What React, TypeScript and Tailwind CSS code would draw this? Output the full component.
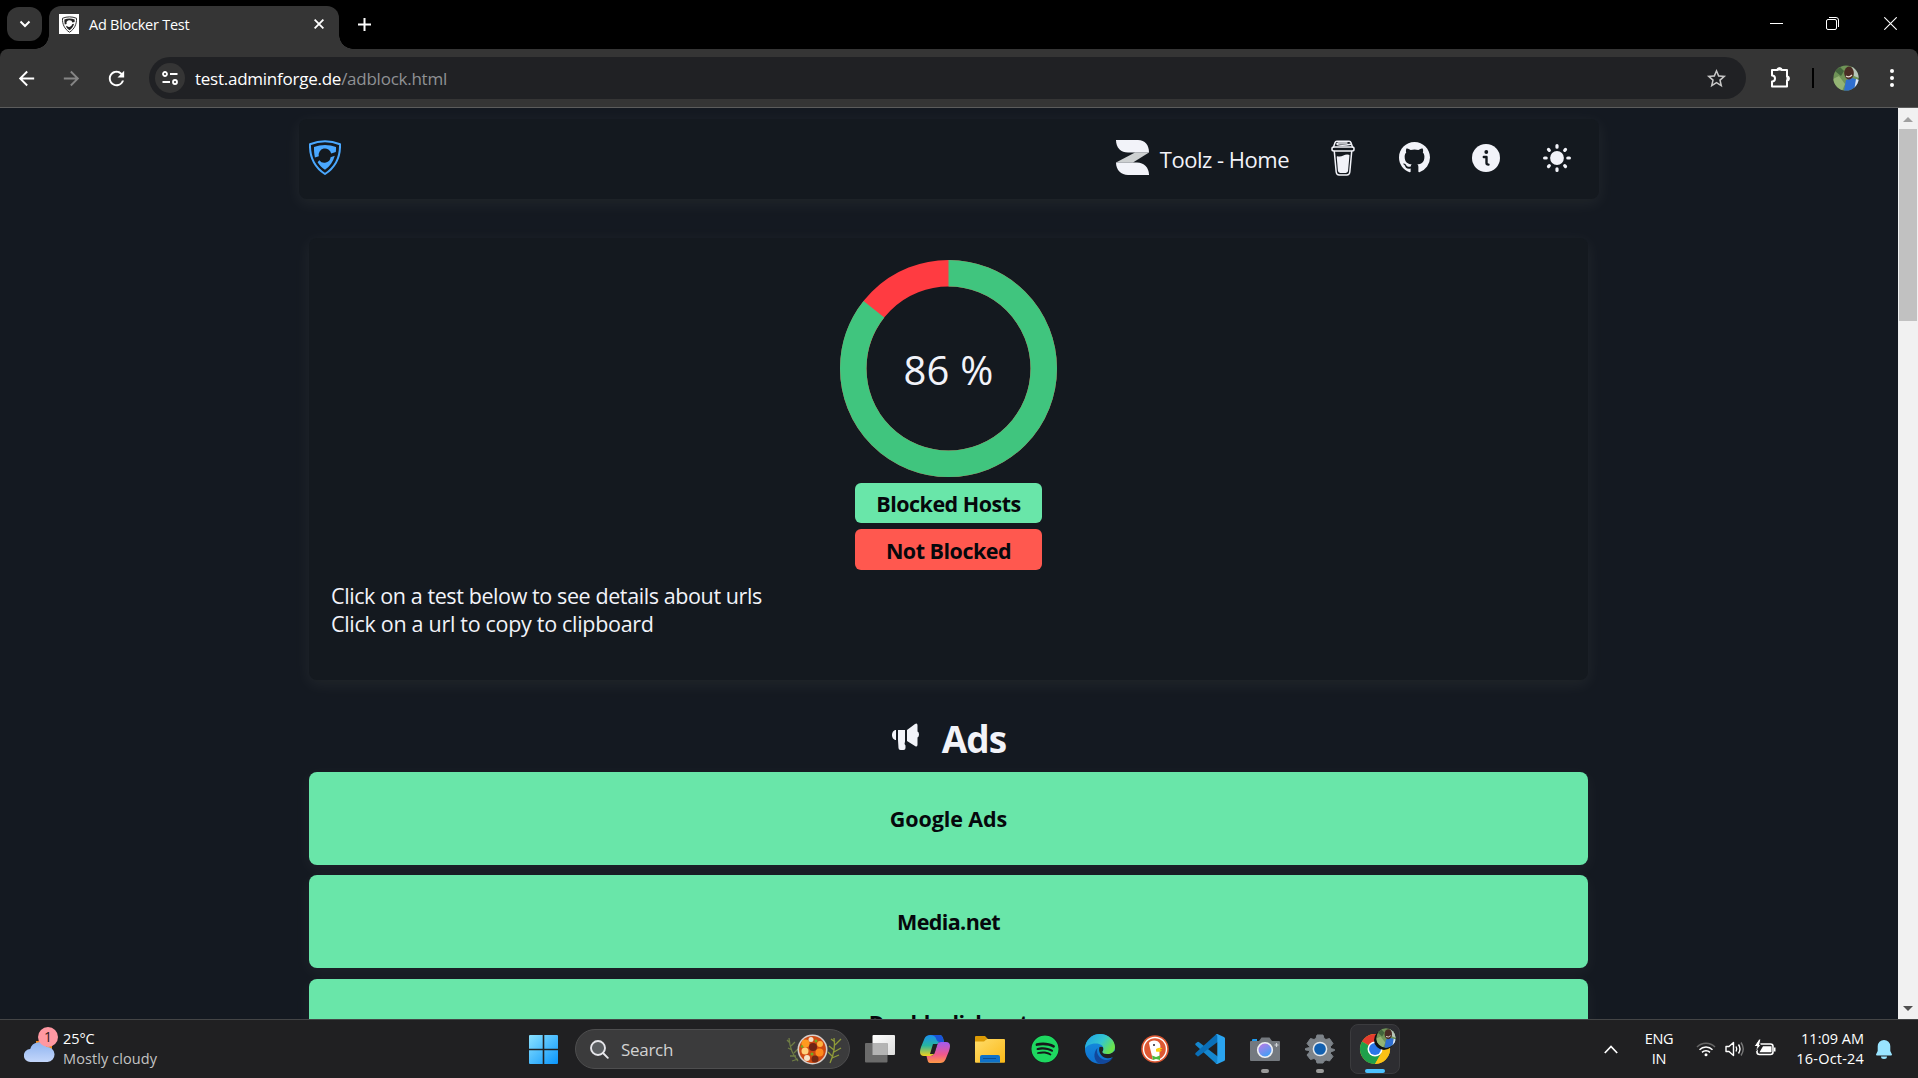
import type { ReactNode } from "react";
import { BsGithub } from "react-icons/bs";
import { FaSpotify } from "react-icons/fa";
import { MdArrowBack, MdArrowForward, MdRefresh, MdStarOutline } from "react-icons/md";

function Shield({ className, color }: { className: string; color: string }) {
  return (
    <svg viewBox="0 0 32 35" className={className} fill="none">
      <path d="M1 4.200C11 .2 21 .2 31 4.200c.4 12.500-4 22.500-15 29.800C5 26.700.6 16.700 1 4.200Z" stroke={color} strokeWidth="2" strokeLinejoin="round" />
      <path d="M5 7C12 4.200 20 4.200 27 7c.1 2 .1 3.200-.2 5l-4.600 1.400A6.300 6.300 0 0 0 9.800 16.200L5.900 17.500C5.100 13.500 4.900 10 5 7Z" fill={color} />
      <path d="M8.600 22.200l1.700-2a6.300 6.300 0 0 0 11.300-3l4.200-1.400c-1.700 6-4.900 10.500-9.800 14-3-2-5.500-4.500-7.400-7.600Z" fill={color} />
    </svg>
  );
}

function Avatar({ className }: { className: string }) {
  return (
    <svg viewBox="0 0 26 26" className={className}>
      <clipPath id="face"><circle cx="13" cy="13" r="12.600" /></clipPath>
      <g clipPath="url(#face)">
        <rect width="26" height="26" fill="#6f9357" />
        <path d="M0 14l6-3 6 8-3 7H0Z" fill="#94b474" />
        <path d="M2 6l5-4 4 4-3 5Z" fill="#42643c" />
        <path d="M18 0h8v13l-5-2Z" fill="#b7c4ba" />
        <path d="M11 26l2-11 6-2 7 2v11Z" fill="#2f6fd0" />
        <path d="M23 14l3 1v7l-5 4Z" fill="#dfe6f2" />
        <ellipse cx="16" cy="8" rx="4.800" ry="6.500" fill="#4a2c25" />
        <path d="M13 11q3 2 6-1" stroke="#e8d8d0" strokeWidth="1.200" fill="none" />
      </g>
    </svg>
  );
}

function TabStrip() {
  return (
    <div className="flex h-[49px] shrink-0 items-start bg-black text-white">
      <div className="ml-[7px] mt-[7px] flex h-[34px] w-[35px] items-center justify-center rounded-xl bg-[#353535]">
        <svg viewBox="0 0 12 8" className="h-2 w-3" fill="none" stroke="#fff" strokeWidth="2"><path d="M1.500 1.500 6 6l4.500-4.500" /></svg>
      </div>
      <div className="ml-[-7px] mt-[35px] h-3.5 w-3.5 bg-[radial-gradient(circle_at_0_0,transparent_13.5px,#353535_14px)]" />
      <div className="mt-1.5 flex h-[43px] w-[290px] items-center rounded-t-xl bg-[#353535] pb-[7px] pr-3">
        <div className="ml-2.5 flex h-5 w-5 items-center justify-center bg-white"><Shield className="h-[17px] w-[15px]" color="#222" /></div>
        <span className="ml-[10px] pt-px text-[14.500px] tracking-[-0.25px]">Ad Blocker Test</span>
        <svg viewBox="0 0 10 10" className="ml-auto mr-[3px] h-[10px] w-[10px]" stroke="#fff" strokeWidth="1.800"><path d="M.6.6l8.800 8.800M9.400.6.6 9.400" /></svg>
      </div>
      <div className="mt-[35px] h-3.5 w-3.5 bg-[radial-gradient(circle_at_100%_0,transparent_13.5px,#353535_14px)]" />
      <svg viewBox="0 0 13 13" className="ml-[5px] mt-[18px] h-[13px] w-[13px]" stroke="#fff" strokeWidth="2"><path d="M6.500 0v13M0 6.500h13" /></svg>
      <div className="ml-auto mr-[21px] mt-[17px] flex items-center">
        <svg viewBox="0 0 13 13" className="mr-[43px] h-[13px] w-[13px]" stroke="#fff" strokeWidth="1"><path d="M0 6.500h13" /></svg>
        <svg viewBox="0 0 13 13" className="mr-[45px] h-[13px] w-[13px]" stroke="#fff" fill="none"><rect x=".5" y="2.500" width="10" height="10" rx="1.500" /><path d="M3 .5h7a2.500 2.500 0 0 1 2.500 2.500v7" /></svg>
        <svg viewBox="0 0 13 13" className="h-[13px] w-[13px]" stroke="#fff" strokeWidth="1.100"><path d="M.3.3l12.400 12.400M12.700.3.3 12.700" /></svg>
      </div>
    </div>
  );
}

function Toolbar() {
  return (
    <div className="h-[59px] shrink-0 bg-black">
      <div className="flex h-full items-center rounded-t-lg border-b border-[#5c5c5c] bg-[#353535] text-white">
        <MdArrowBack className="ml-[15px] h-[23px] w-[23px]" />
        <MdArrowForward className="ml-[22px] h-[23px] w-[23px] text-[#858585]" />
        <MdRefresh className="ml-[22px] h-[23px] w-[23px]" />
        <div className="ml-[21px] flex h-[42px] w-[1597px] items-center rounded-full bg-[#202124]">
          <div className="ml-[6px] flex h-[30px] w-[30px] items-center justify-center rounded-full bg-[#353535]">
            <svg viewBox="0 0 16 14" className="h-3.5 w-4" fill="none" stroke="#fff" strokeWidth="1.800"><circle cx="3" cy="3" r="2" /><circle cx="13" cy="11" r="2" /><path d="M8 3h7.500M.5 11H8" /></svg>
          </div>
          <span className="ml-[10px] pt-px text-[17px] tracking-[-0.25px] text-[#8f9194]"><span className="text-white">test.adminforge.de</span>/adblock.html</span>
          <MdStarOutline className="ml-auto mr-[18px] h-[23px] w-[23px] text-[#c7c7c7]" />
        </div>
        <svg viewBox="0 0 21 21" className="ml-[24px] mt-[-2px] h-[21px] w-[21px]" fill="none" stroke="#fff" strokeWidth="2" strokeLinejoin="round">
          <path d="M2 3h5.500a2 1.800 0 0 1 4 0H17v6.500a1.800 2 0 0 1 0 4V19.500H2v-5a3 3 0 0 0 0-6Z" />
          <path d="M7.500 3a2 2 0 0 1 4 0ZM17 9.500a2 2 0 0 1 0 4Z" fill="#fff" strokeWidth="1" />
        </svg>
        <div className="ml-[21px] h-5 w-0.5 bg-black" />
        <Avatar className="ml-[19px] h-[26px] w-[26px]" />
        <svg viewBox="0 0 4 18" className="ml-[31px] h-[18px] w-1" fill="#fff"><circle cx="2" cy="2" r="2" /><circle cx="2" cy="9" r="2" /><circle cx="2" cy="16" r="2" /></svg>
      </div>
    </div>
  );
}

function ToolzLogo() {
  return (
    <svg viewBox="0 0 33 35" className="h-[35px] w-[33px]">
      <path d="M0 22.500 19 12.500h14L17 22.500Z" fill="#cdd0d1" />
      <path d="M0 0h22c7 0 11 5 11 12.500H12C5 12.500 0 8 0 0Z" fill="#f2f3f9" />
      <path d="M0 22.500h21c7 0 12 5 12 12.500H12C5 35 0 30 0 22.500Z" fill="#f2f3f9" />
    </svg>
  );
}

function CoffeeCup() {
  return (
    <svg viewBox="0 0 24 36" className="h-9 w-6" fill="none" stroke="#f2f3f9" strokeWidth="1.500" strokeLinecap="round" strokeLinejoin="round">
      <path d="M2.500 7 4 2.800Q4.300 1.300 6 1.200h12q1.700.1 2 1.600L21.500 7" />
      <path d="M20 4.200Q11 6 6.500 4.600 5 3.500 7.500 3H16" />
      <path d="M1 8.500Q1 7 3 7h18q2 0 2 1.500v1Q23 11 21 11H3q-2 0-2-1.500Z" />
      <path d="M3.300 11.500 5.200 32q.3 3 3 3h7.600q2.700 0 3-3l1.900-20.500" />
      <path d="m6.500 17 1.200 14q.2 1.200 1.500 1.200h5.600q1.300 0 1.500-1.200L17.700 15.500q-2.700-.5-5 .7-3 1.500-6.200.8Z" fill="#f2f3f9" />
    </svg>
  );
}

function InfoIcon() {
  return (
    <svg viewBox="0 0 28 28" className="mb-0.5 ml-[42px] h-7 w-7" fill="none">
      <circle cx="14" cy="14" r="14" fill="#f2f3f9" />
      <circle cx="14.300" cy="8" r="1.900" fill="#14191f" />
      <path d="M11.800 13h2.700v6q0 1.600 2 1.600" stroke="#14191f" strokeWidth="2.400" strokeLinecap="round" strokeLinejoin="round" />
    </svg>
  );
}

function SunIcon() {
  return (
    <svg viewBox="0 0 28 28" className="mb-0.5 ml-[43px] mr-7 h-7 w-7" stroke="#f2f3f9" strokeWidth="3.200" strokeLinecap="round">
      <circle cx="14" cy="14" r="6.900" fill="#f2f3f9" stroke="none" />
      <path d="M14 1.600v1.600M14 24.800v1.600M1.600 14h1.600M24.800 14h1.600M5.500 5.500l.8.800M21.700 21.700l.8.800M5.500 22.500l.8-.8M21.700 6.300l.8-.8" />
    </svg>
  );
}

function SiteHeader() {
  return (
    <header className="mt-[11px] flex h-20 w-[1300px] shrink-0 items-center rounded-lg bg-[#14191f] text-[#f2f3f9] shadow-[0_4px_15px_2px_rgba(255,255,220,0.05)]">
      <Shield className="mb-1 ml-[10px] h-[35px] w-8" color="#4aa8ff" />
      <div className="mb-[3px] ml-auto"><ToolzLogo /></div>
      <span className="ml-[11px] text-[22px] tracking-[-0.5px]">Toolz - Home</span>
      <div className="mb-[3px] ml-[42px]"><CoffeeCup /></div>
      <BsGithub className="mb-[3px] ml-[44px] h-[31px] w-[31px]" />
      <InfoIcon />
      <SunIcon />
    </header>
  );
}

function Donut() {
  const length = 2 * Math.PI * 95.25;
  return (
    <div className="relative h-[217px] w-[217px]">
      <svg viewBox="0 0 217 217" className="h-full w-full" fill="none" strokeWidth="26.500">
        <circle cx="108.500" cy="108.500" r="95.250" stroke="#ff3b41" />
        <circle cx="108.500" cy="108.500" r="95.250" stroke="#40c57e" strokeDasharray={`${length * 0.8555} ${length}`} transform="rotate(-90 108.500 108.500)" />
      </svg>
      <div className="absolute inset-0 flex items-center justify-center pt-0.5 text-[40px] tracking-[0.2px] text-[#f2f3f9]">86 %</div>
    </div>
  );
}

function Results() {
  return (
    <section className="mr-px mt-[39px] flex h-[442px] w-[1279px] shrink-0 flex-col items-center rounded-lg bg-[#14191f] pt-[22px] shadow-[0_4px_15px_2px_rgba(255,255,220,0.05)]">
      <Donut />
      <div className="mt-1.5 flex h-10 w-[187px] items-center justify-center rounded-md bg-[#69e6a9] pt-0.5 text-[21.500px] font-bold tracking-[-0.5px] text-[#06080c]">Blocked Hosts</div>
      <div className="mt-1.5 flex h-[41px] w-[187px] items-center justify-center rounded-md bg-[#ff584f] pt-1 text-[21.500px] font-bold tracking-[-0.5px] text-[#06080c]">Not Blocked</div>
      <p className="mt-[12px] w-full pl-[22px] text-[21.500px] leading-7 tracking-[-0.4px] text-[#f2f3f9]">Click on a test below to see details about urls<br /><span className="tracking-[-0.3px]">Click on a url to copy to clipboard</span></p>
    </section>
  );
}

function Megaphone() {
  return (
    <svg viewBox="0 0 28 28" className="mb-0.5 h-7 w-7" fill="#f2f3f9">
      <path d="M4 7v10C1.500 17 0 14.500 0 12s1.500-5 4-5Z" />
      <path d="M6 7h7v11.500q-1 2 .5 4V25q0 2-2 2H8.500Q6.500 27 6.500 25L6 17Z" />
      <path d="M15 7l8-6q2.500-1.500 2.500 1.500v6q1.500.6 1.500 3t-1.500 3v7q0 3-2.500 1.500L15 18Z" />
    </svg>
  );
}

function Host({ name, className }: { name: string; className: string }) {
  return (
    <div className={`mb-[10.400px] mr-px flex h-[93px] w-[1279px] shrink-0 items-center justify-center rounded-lg bg-[#69e6a9] text-[21.500px] font-bold text-[#06080c] shadow-[0_4px_15px_2px_rgba(255,255,220,0.04)] ${className}`}>{name}</div>
  );
}

function Page() {
  return (
    <div className="flex min-h-0 flex-1 overflow-hidden">
      <main className="flex flex-1 flex-col items-center overflow-hidden bg-[#141921]">
        <SiteHeader />
        <Results />
        <h2 className="flex h-[92px] shrink-0 items-center gap-[22px] pt-[24px] text-[#f2f3f9]"><Megaphone /><span className="text-[37px] font-bold leading-none tracking-[-1px]">Ads</span></h2>
        <Host name="Google Ads" className="pt-px tracking-[-0.1px]" />
        <Host name="Media.net" className="pt-px tracking-[-0.6px]" />
        <Host name="Doubleclick.net" className="pb-1 tracking-[-0.5px]" />
      </main>
      <div className="flex w-5 flex-col items-center bg-[#f1f1f1]">
        <svg viewBox="0 0 20 21" className="h-[21px] w-5 shrink-0" fill="#a0a0a0"><path d="M5 14l5-5 5 5Z" /></svg>
        <div className="h-[192px] w-[18px] bg-[#c1c1c1]" />
        <svg viewBox="0 0 20 21" className="mt-auto h-[21px] w-5" fill="#505050"><path d="M5 8l5 5 5-5Z" /></svg>
      </div>
    </div>
  );
}

function AppCell({ children, running, active }: { children: ReactNode; running?: boolean; active?: boolean }) {
  return (
    <div className="flex h-[59px] w-[55px] items-center justify-center">
      <div className={active ? "flex h-[50px] w-[50px] flex-col items-center rounded-lg border border-[#3b3b3e] bg-[#2d2d31] pt-[9px]" : "flex h-[50px] w-[50px] flex-col items-center pt-[10px]"}>
        {children}
        {running && <div className="mt-[5px] h-1 w-2 rounded-full bg-[#9a9a9a]" />}
        {active && <div className="mt-[5px] h-1 w-5 shrink-0 rounded-full bg-[#4cc2ff]" />}
      </div>
    </div>
  );
}

const ICON = "h-[30px] w-[30px] shrink-0 overflow-visible";

function Chrome() {
  return (
    <svg viewBox="0 0 30 30" className={ICON}>
      <circle cx="15" cy="15" r="15" fill="#fbc116" />
      <path d="M15 15 2 7.500A15 15 0 0 1 28 7.500Z" fill="#e33b2e" />
      <path d="M2 7.500A15 15 0 0 0 15 30l6.500-11.200L15 15Z" fill="#1fa04b" />
      <path d="M28 7.500H15l6.500 11.300L15 30A15 15 0 0 0 28 7.500Z" fill="#fbc116" />
      <circle cx="15" cy="15" r="7.500" fill="#fff" /><circle cx="15" cy="15" r="6" fill="#2b76e8" />
      <circle cx="24" cy="6" r="10" fill="#111" />
      <svg x="16" y="-6" width="20" height="20" viewBox="0 0 26 26"><Avatar className="" /></svg>
    </svg>
  );
}

function SearchBox() {
  return (
    <div className="ml-[17px] flex h-10 w-[275px] items-center rounded-full border border-[#4e4e4f] bg-[#3b3b3c]">
      <svg viewBox="0 0 19 19" className="ml-[14px] h-[19px] w-[19px]" fill="#5a5d60" stroke="#e6e6ea" strokeWidth="1.900" strokeLinecap="round"><circle cx="8" cy="8" r="7" /><path d="m13 13 4.800 4.800" /></svg>
      <span className="ml-[12px] pt-px text-[17px] tracking-[-0.3px] text-[#d2d2d2]">Search</span>
      <svg viewBox="0 0 56 31" className="ml-auto mr-[7px] h-[31px] w-14">
        <g stroke="#6f7d45" strokeWidth="1.300" fill="none">
          <path d="M3 4q1 14 9 23M4 9 1 6M5 12l4-4M6 16l-4-2M8 19l4-4M10 22l-6 0M12 25l-6 2" />
          <path stroke="#8f9b39" d="M48 4q2 12-4 25M49 8l-4-3M49 11l6-6M48 16l-5-4M48 18l7-4M46 22l-4-4M46 24l7-3" />
        </g>
        <circle cx="26.500" cy="15.500" r="15" fill="#d8d0cc" /><circle cx="26.500" cy="15.500" r="13.400" fill="#cf4a12" />
        <circle cx="19.500" cy="9.500" r="4" fill="#ff9a1f" /><circle cx="33.500" cy="18.500" r="4" fill="#ff8a1c" /><circle cx="19" cy="17" r="3.500" fill="#ffd07a" /><circle cx="34" cy="10" r="3" fill="#ffb13d" />
        <circle cx="27" cy="13" r="4" fill="#6f2415" /><circle cx="29" cy="25" r="3.500" fill="#742812" /><circle cx="21" cy="24" r="3" fill="#f6e3c6" /><circle cx="25" cy="5.500" r="2.500" fill="#f3dfc4" />
        <circle cx="26" cy="20" r="1.500" fill="#6fae22" /><circle cx="30" cy="7" r="1.400" fill="#6fae22" /><circle cx="16" cy="12.500" r="1.300" fill="#6fae22" />
      </svg>
    </div>
  );
}

function Taskbar() {
  return (
    <div className="flex h-[59px] shrink-0 items-center border-t border-[#444546] bg-[#202022] text-white">
      <div className="relative ml-6 h-[38px] w-[34px]">
        <svg viewBox="0 0 34 38" className="mt-[-4px] h-[38px] w-[34px]">
          <defs><linearGradient id="cloud" x2="0" y2="1"><stop stopColor="#8fb4f0" /><stop offset="1" stopColor="#c3d6fa" /></linearGradient></defs>
          <path d="M12 15h16v8H12Z" fill="#f28a1a" />
          <path d="M6.500 36a6.500 6.500 0 0 1-.3-13A8.800 8.800 0 0 1 22.500 21 7.500 7.500 0 1 1 23.500 36Z" fill="url(#cloud)" />
          <circle cx="24" cy="11" r="10" fill="#ff98a2" />
        </svg>
        <span className="absolute left-[20px] top-[-3px] text-[14px] leading-5 text-[#2a1a1d]">1</span>
      </div>
      <div className="ml-[5px] text-[14.500px] leading-5 tracking-[-0.1px]">25°C<br /><span className="tracking-[0.1px] text-[#c4c4c4]">Mostly cloudy</span></div>
      <div className="ml-auto" />
      <div className="flex w-[874px] items-center">
        <svg viewBox="0 0 29 29" className="h-[29px] w-[29px]"><defs><linearGradient id="win" x2="1" y2="1"><stop stopColor="#8be2ff" /><stop offset="1" stopColor="#0a95fb" /></linearGradient></defs><path d="M0 1q0-1 1-1h12.700v13.800H0ZM15.300 0H28q1 0 1 1v12.800H15.300ZM0 15.300h13.700V29H1q-1 0-1-1ZM15.300 15.300H29V28q0 1-1 1H15.300Z" fill="url(#win)" /></svg>
        <SearchBox />
        <div className="ml-[2px] flex">
          <AppCell><svg viewBox="0 0 30 30" className={ICON}><defs><linearGradient id="tv" x2="1" y2="1"><stop stopColor="#fff" /><stop offset="1" stopColor="#dcdcdc" /></linearGradient></defs><rect x="7.500" y="1" width="22.500" height="20" rx="1" fill="url(#tv)" /><rect y="9" width="22.500" height="19.500" rx="1" fill="#6b6b6b" /><path d="M7.500 9h15v12h-15Z" fill="#b4b4b4" /></svg></AppCell>
          <AppCell><svg viewBox="0 0 30 30" className={ICON}><defs><linearGradient id="cpa" x2="0" y2="1"><stop stopColor="#1b8ff0" /><stop offset=".5" stopColor="#27b5a0" /><stop offset="1" stopColor="#f4d11c" /></linearGradient><linearGradient id="cpb" x2="0" y2="1"><stop stopColor="#a25bf0" /><stop offset=".6" stopColor="#f0588b" /><stop offset="1" stopColor="#ff9a45" /></linearGradient></defs>
            <path d="M20 1q2 0 3 3l1 4h-3q-3 0-4 3l-2.500 8Q13.500 22 10.500 22H4q-4 0-4-4 0-2 1-5L4.500 4.500Q6 1 10 1Z" fill="url(#cpa)" />
            <path d="M10 29q-2 0-2.500-3L6.500 22h4q3 0 4-3L17 11q1-3 4-3h5q4 0 4 4 0 2-1 5l-3.500 8.500Q24 29 20 29Z" fill="url(#cpb)" />
            <path d="m13 10-3 10h3.500q1 0 1.500-2l2.500-8Z" fill="#202022" />
            <path d="M10 1h10q2 0 3 3l1 4h-4Q17 8 16 4.500 15 1 10 1Z" fill="#1a53d8" /></svg></AppCell>
          <AppCell><svg viewBox="0 0 30 30" className={ICON}><defs><linearGradient id="fol" x2="1" y2="1"><stop stopColor="#ffdc6a" /><stop offset="1" stopColor="#fbb917" /></linearGradient></defs><path d="M0 3q0-1 1-1h9l3 3h-1l-2 4H0Z" fill="#dc9a05" /><path d="M0 7.500h9L12 5h17q1 0 1 1v22q0 .800-1 .800H1q-1 0-1-.800Z" fill="url(#fol)" /><path d="M5 28.800V23q0-2 2-2h16q2 0 2 2v5.800Z" fill="#0f72c9" /><path d="M8 24.500h13" stroke="#0b4e93" strokeWidth="1" /></svg></AppCell>
          <AppCell><div className="flex h-[30px] items-center"><FaSpotify className="h-7 w-7 rounded-full bg-[#16181a] text-[#1ed760]" /></div></AppCell>
          <AppCell><svg viewBox="0 0 30 30" className={ICON}><defs><linearGradient id="ea" x2="1" y2=".5"><stop stopColor="#1d9fe8" /><stop offset=".6" stopColor="#34c6cf" /><stop offset="1" stopColor="#6be34b" /></linearGradient><linearGradient id="eb" x2="0" y2="1"><stop stopColor="#1591e0" /><stop offset="1" stopColor="#0f6fcf" /></linearGradient></defs>
            <circle cx="15" cy="15" r="15" fill="url(#eb)" />
            <path d="M12.500 14c-2 6 3 12 9 12 3 0 5-1 6.800-3.200C26 27.500 21 30.500 15.500 30 8 28 8 18 12.500 14Z" fill="#12479b" />
            <path d="M14.500 13q4-1 4 1.700c0 2-1 2.500-1 3.300 0 1 2 2 5 2 3 0 5.500-1.500 6.800-3.500L32 21l-4 2q-4 2-7 1c-5-1-8-6.500-6.500-11Z" fill="#202022" />
            <path d="M0 15C0 6 7 0 15 0s15 6 15 13c0 4.500-3.500 7-7.500 7-3 0-5-1-5-2 0-.8 1-1.300 1-3.300C18.500 12 15.500 9.500 11 9.500 5 9.500 1 12 0 15Z" fill="url(#ea)" /></svg></AppCell>
          <AppCell><svg viewBox="0 0 30 30" className={ICON}><circle cx="15" cy="15" r="13.800" fill="#de5833" /><circle cx="15" cy="15" r="11.500" fill="none" stroke="#fff" strokeWidth="1.400" /><path d="M9 9c1-3 9-4 11 1 1 3 0 5-.5 6.500V26q-4 1.500-6.500 0L10 14Z" fill="#fff" /><circle cx="14" cy="11" r="1" fill="#223" /><path d="M16 15q4-2 6.500-.5-2 1-4 1.500 3 0 3.500.8-2 1.500-6 .7Z" fill="#fdd20a" /><path d="M12 21.500l4 1.500 4-1.500v4.500l-4-1-3 1Z" fill="#4cba3c" /></svg></AppCell>
          <AppCell><svg viewBox="0 0 30 30" className={ICON}><path d="M.5 9.500 2.500 8q.6-.4 1.300.1L24 23.500v5L21.500 30 .5 11Q0 10.200.5 9.500Z" fill="#1587cf" /><path d="M.5 20.500l2 1.700q.6.400 1.300-.1L24 7V1.500L21.500 0 .5 19Q0 19.800.5 20.500Z" fill="#0a6fb8" /><path d="M22.300 0 29 3q1 .5 1 1.500v21q0 1-1 1.500l-6.700 3Q21 30 20.500 29.500q1.800.5 1.800-1.500V2Q22.300 0 20.500.5 21 0 22.300 0Z" fill="#2aa4f0" /></svg></AppCell>
          <AppCell running><svg viewBox="0 0 30 30" className={ICON}><path d="M2 6q0-1 1-1h4v3H2Z" fill="#1f9cf0" /><path d="M1 7h8l2.500-3.500h8L22 7h7q1 0 1 1v18q0 1-1 1H1q-1 0-1-1V8q0-1 1-1Z" fill="#74797f" /><defs><linearGradient id="lens" x2=".6" y2="1"><stop stopColor="#c977e6" /><stop offset="1" stopColor="#3fa0f5" /></linearGradient></defs><circle cx="15" cy="16" r="7.300" fill="url(#lens)" stroke="#eef0f3" strokeWidth="1.600" /><path d="M26.500 9v4M24.500 11h4" stroke="#d0d4d8" strokeWidth="1.200" /></svg></AppCell>
          <AppCell running><svg viewBox="0 0 30 30" className={ICON}><path d="M11 4.500 12 1h6l1 3.500 2 1L24.500 4.500l3.500 5-2.500 3v2l4 1v1l-4 1.500v1.500l2.500 3-3.500 4.500-3.500-1-2 1.200L18 29h-6l-1-3.300-2-1.200-3.500 1L2 21l2.500-3v-1.500l-4-.5v-1.500l4-1v-1L2 9.500l3.500-5L9 5.500Z" fill="#7d8389" stroke="#7d8389" strokeLinejoin="round" /><circle cx="15" cy="15" r="6.600" fill="#1260b0" stroke="#e4e8ec" strokeWidth="1.500" /></svg></AppCell>
          <AppCell active><Chrome /></AppCell>
        </div>
      </div>
      <div className="ml-[201px] flex items-center">
        <svg viewBox="0 0 14 9" className="h-[9px] w-3.5" fill="none" stroke="#fff" strokeWidth="1.700"><path d="M.8 8 7 1.500 13.200 8" /></svg>
        <div className="ml-[24px] w-[34px] text-center text-[14.500px] leading-5 tracking-[-0.3px]">ENG<br />IN</div>
        <svg viewBox="0 0 20 16" className="ml-5 h-4 w-5" fill="none" stroke="#fff" strokeWidth="1.500"><path d="M1 6a12.500 12.500 0 0 1 18 0" stroke="#666" /><path d="M3.500 8.700a9 9 0 0 1 13 0M6 11.400a5.700 5.700 0 0 1 8 0" /><circle cx="10" cy="13.800" r="1.500" fill="#fff" stroke="none" /></svg>
        <svg viewBox="0 0 20 16" className="ml-[9px] h-4 w-5" fill="none" stroke="#fff" strokeWidth="1.400" strokeLinejoin="round"><path d="M1 5.500h3L8.500 1.500v13L4 10.500H1ZM11 5.500q1.500 2.500 0 5M13.500 3.500q3 4.500 0 9" /><path d="M16 1.500q4.500 6.500 0 13" stroke="#777" /></svg>
        <svg viewBox="0 0 21 16" className="ml-[10px] h-4 w-[21px] overflow-visible"><rect x="2" y="3" width="16" height="10.500" rx="2.500" fill="none" stroke="#fff" strokeWidth="1.600" /><path d="M19 6.500h1.500v4H19ZM8 5.300h8.500v6h-12Z" fill="#fff" /><path d="M4-2-1 5.500h3L0 11l6-7H4.500L6-2Z" fill="#fff" stroke="#202022" /></svg>
        <div className="ml-[16px] w-[72px] text-right text-[14.500px] leading-5">11:09 AM<br /><span className="tracking-[0.2px]">16-Oct-24</span></div>
        <svg viewBox="0 0 16 19" className="ml-3 mr-[26px] h-[19px] w-4" fill="#99e4ff"><path d="M8 0a6.300 6.300 0 0 1 6.300 6.300V11L16 14.500q0 1-1 1H1q-1 0-1-1L1.700 11V6.300A6.300 6.300 0 0 1 8 0ZM5 16.500h6a3 2.500 0 0 1-6 0Z" /></svg>
      </div>
    </div>
  );
}

export default function App() {
  return (
    <div className="flex h-[1078px] w-[1918px] flex-col overflow-hidden bg-black font-['Open_Sans','Noto_Sans',sans-serif]">
      <TabStrip />
      <Toolbar />
      <Page />
      <Taskbar />
    </div>
  );
}
